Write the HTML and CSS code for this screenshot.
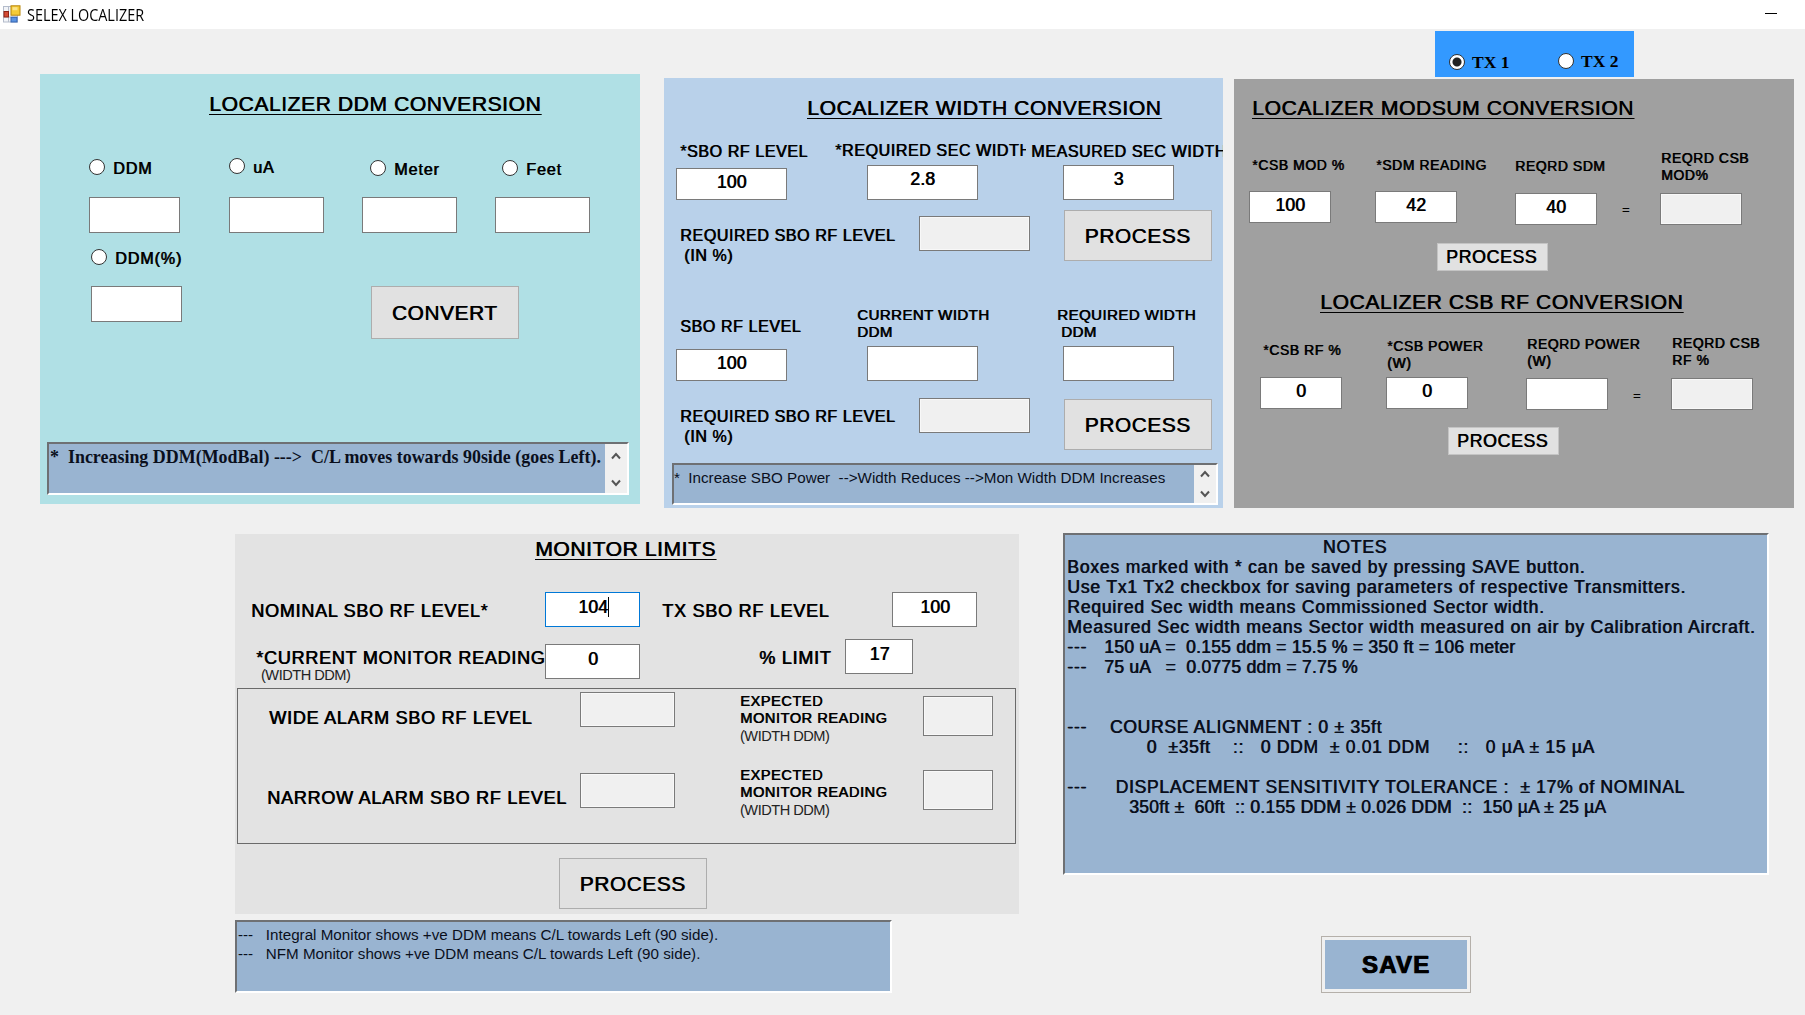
FILE: index.html
```html
<!DOCTYPE html>
<html lang="en">
<head>
<meta charset="utf-8">
<title>SELEX LOCALIZER</title>
<link rel="stylesheet" href="styles.css">
</head>
<body>
<header class="titlebar">
  <svg class="app-icon" width="18" height="18" viewBox="0 0 18 18">
    <rect x=".5" y="1.5" width="14" height="15.5" fill="#f2f4f8" stroke="#b4bccb"/>
    <path d="M5.5 1.5v15.500M.5 12h14" stroke="#b4bccb" fill="none"/>
    <rect x="8" y=".8" width="9" height="9.400" fill="#f5cb35" stroke="#b8860b"/>
    <rect x="9.500" y="2.200" width="5" height="3" fill="#fbe48a"/>
    <rect x="1" y="6.500" width="4.500" height="5.500" fill="#d34a34" stroke="#8f2415"/>
    <rect x="8" y="12.300" width="6" height="4.700" fill="#5b93e0" stroke="#3465b4"/>
  </svg>
  <span class="app-name">SELEX LOCALIZER</span>
  <span class="minimize"></span>
</header>

<main>
  <div class="upper">
    <section class="panel ddm">
      <h2>LOCALIZER DDM CONVERSION</h2>
      <div class="row ddm-radios">
        <label class="radio d1"><i></i>DDM</label>
        <label class="radio"><i></i>uA</label>
        <label class="radio d2"><i></i>Meter</label>
        <label class="radio d2"><i></i>Feet</label>
      </div>
      <div class="row ddm-inputs">
        <div class="field w91"></div><div class="field w95"></div><div class="field w95"></div><div class="field w95"></div>
      </div>
      <label class="radio percent"><i></i>DDM(%)</label>
      <div class="row ddm-convert">
        <div class="field w91"></div><button>CONVERT</button>
      </div>
      <div class="memo ddm-memo">
        <p>*  Increasing DDM(ModBal) ---&gt;  C/L moves towards 90side (goes Left).</p>
        <div class="scroll">
          <svg viewBox="0 0 10 8"><path d="M1 6.500 5 2l4 4.500"/></svg>
          <svg viewBox="0 0 10 8"><path d="M1 1.500 5 6l4-4.500"/></svg>
        </div>
      </div>
    </section>

    <section class="panel width">
      <h2>LOCALIZER WIDTH CONVERSION</h2>
      <div class="row width-labels">
        <span class="label d1">*SBO RF LEVEL</span>
        <span class="label clip">*REQUIRED SEC WIDTH</span>
        <span class="label d1">MEASURED SEC WIDTH</span>
      </div>
      <div class="row width-inputs first">
        <div class="field short d3">100</div><div class="field">2.8</div><div class="field">3</div>
      </div>
      <div class="row width-result r1">
        <div class="label two">REQUIRED SBO RF LEVEL<br><span class="indent">(IN %)</span></div>
        <div class="field off"></div>
        <button>PROCESS</button>
      </div>
      <div class="row width-labels2">
        <span class="label d11">SBO RF LEVEL</span>
        <div class="label tight">CURRENT WIDTH<br>DDM</div>
        <div class="label tight">REQUIRED WIDTH<br><span class="indent">DDM</span></div>
      </div>
      <div class="row width-inputs second">
        <div class="field short d3">100</div><div class="field"></div><div class="field"></div>
      </div>
      <div class="row width-result r2">
        <div class="label two">REQUIRED SBO RF LEVEL<br><span class="indent">(IN %)</span></div>
        <div class="field off"></div>
        <button>PROCESS</button>
      </div>
      <div class="memo width-memo">
        <p>*  Increase SBO Power  --&gt;Width Reduces --&gt;Mon Width DDM Increases</p>
        <div class="scroll">
          <svg viewBox="0 0 10 8"><path d="M1 6.500 5 2l4 4.500"/></svg>
          <svg viewBox="0 0 10 8"><path d="M1 1.500 5 6l4-4.500"/></svg>
        </div>
      </div>
    </section>

    <div class="right-col">
      <div class="tx">
        <label class="radio on"><i></i>TX 1</label>
        <label class="radio tx2"><i></i>TX 2</label>
      </div>
      <section class="panel mod">
        <h2>LOCALIZER MODSUM CONVERSION</h2>
        <div class="row mod-labels">
          <span class="small d7">*CSB MOD %</span>
          <span class="small d7">*SDM READING</span>
          <span class="small d8">REQRD SDM</span>
          <span class="small">REQRD CSB<br>MOD%</span>
        </div>
        <div class="row mod-inputs">
          <div class="field">100</div><div class="field">42</div><div class="field d2">40</div>
          <span class="small equals d11">=</span><div class="field off d2"></div>
        </div>
        <button class="mini">PROCESS</button>
        <h2 class="rf-title">LOCALIZER CSB RF CONVERSION</h2>
        <div class="row rf-labels">
          <span class="small d7">*CSB RF %</span>
          <span class="small d3">*CSB POWER<br>(W)</span>
          <span class="small d1">REQRD POWER<br>(W)</span>
          <span class="small">REQRD CSB<br>RF %</span>
        </div>
        <div class="row rf-inputs">
          <div class="field">0</div><div class="field">0</div><div class="field d1"></div>
          <span class="small equals d11">=</span><div class="field off d1"></div>
        </div>
        <button class="mini rf-button">PROCESS</button>
      </section>
    </div>
  </div>

  <div class="lower">
    <div class="left-col">
      <section class="panel monitor">
        <h2>MONITOR LIMITS</h2>
        <div class="row mon1">
          <span class="large d9">NOMINAL SBO RF LEVEL*</span>
          <div class="field focus w95">104<b class="caret"></b></div>
          <span class="large d9">TX SBO RF LEVEL</span>
          <div class="field w85">100</div>
        </div>
        <div class="row mon2">
          <div class="large d9">*CURRENT MONITOR READING<span class="sub">(WIDTH DDM)</span></div>
          <div class="field w95 d5">0</div>
          <span class="large d9">% LIMIT</span>
          <div class="field w68">17</div>
        </div>
        <div class="alarms">
          <div class="row alarm">
            <span class="large wide">WIDE ALARM SBO RF LEVEL</span>
            <div class="field off w95"></div>
            <div class="label tight expected">EXPECTED<br>MONITOR READING<span class="sub">(WIDTH DDM)</span></div>
            <div class="field off tall"></div>
          </div>
          <div class="row alarm">
            <span class="large narrow">NARROW ALARM SBO RF LEVEL</span>
            <div class="field off w95 d7"></div>
            <div class="label tight expected">EXPECTED<br>MONITOR READING<span class="sub">(WIDTH DDM)</span></div>
            <div class="field off tall"></div>
          </div>
        </div>
        <button>PROCESS</button>
      </section>
      <div class="memo log"><p>---   Integral Monitor shows +ve DDM means C/L towards Left (90 side).
---   NFM Monitor shows +ve DDM means C/L towards Left (90 side).</p></div>
    </div>

    <div class="notes-col">
      <div class="memo notes"><p>                                             NOTES
Boxes marked with * can be saved by pressing SAVE button.
Use Tx1 Tx2 checkbox for saving parameters of respective Transmitters.
Required Sec width means Commissioned Sector width.
Measured Sec width means Sector width measured on air by Calibration Aircraft.
<span class="dash">---</span>   <span class="figures">150 uA =  0.155 ddm = 15.5 % = 350 ft = 106 meter</span>
<span class="dash">---</span>   <span class="figures">75 uA   =  0.0775 ddm = 7.75 %</span>


<span class="dash">---</span>    <span class="course">COURSE ALIGNMENT : 0 ± 35ft</span>
              <span class="course">0  ±35ft    ::   0 DDM  ± 0.01 DDM     ::   0 µA ± 15 µA</span>

<span class="dash">---</span>     <span class="course">DISPLACEMENT SENSITIVITY TOLERANCE :  ± 17% of NOMINAL</span>
          <span class="figures"> 350ft ±  60ft  :: 0.155 DDM ± 0.026 DDM  ::  150 µA ± 25 µA</span></p></div>
      <button class="save"><span>SAVE</span></button>
    </div>
  </div>
</main>
</body>
</html>
```
FILE: styles.css
```css
* { box-sizing: border-box; }

body {
  margin: 0;
  width: 1805px;
  height: 1015px;
  overflow: hidden;
  background: #f0f0f0;
  color: #000;
  font-family: "Liberation Sans", Arial, sans-serif;
}

h2, p { margin: 0; font-weight: normal; }

/* title bar */
.titlebar {
  display: flex;
  height: 29px;
  padding: 5px 28px 0 3px;
  background: #fff;
}
.app-icon { flex: none; }
.app-name {
  margin: -1px 0 0 6px;
  font: 16px/22px "Open Sans", sans-serif;
  transform: scaleX(.9);
  transform-origin: left;
  white-space: nowrap;
}
.minimize { width: 12px; height: 1px; margin: 8px 0 0 auto; background: #000; }

/* emboldened text */
h2, .label, .small, .large, .radio, .field, button, .notes p {
  letter-spacing: .6px;
  text-shadow: .7px 0 0 currentColor;
  white-space: nowrap;
}
h2 {
  font-size: 21.1px;
  line-height: 24px;
  letter-spacing: .55px;
  text-decoration: underline;
  text-decoration-thickness: 1px;
  text-underline-offset: 3px;
}
.label { font-size: 16px; line-height: 18px; }
.label.two { line-height: 20px; }
.label.tight { font-size: 15px; line-height: 16.5px; letter-spacing: .45px; }
.small { font-size: 13.9px; line-height: 16.5px; }
.large { font-size: 18px; line-height: 20px; letter-spacing: .75px; }
.equals { font-size: 12px; }
.clip { width: 191px; overflow: hidden; }
.indent { margin-left: 4px; }
.sub {
  display: block;
  font-size: 14.6px;
  line-height: 16px;
  letter-spacing: -.5px;
  text-shadow: none;
  color: #222;
}

/* rows and small vertical shifts */
.row { display: grid; align-items: start; justify-items: start; }
.d1 { margin-top: 1px; }
.d2 { margin-top: 2px; }
.d3 { margin-top: 3px; }
.d5 { margin-top: 5px; }
.d7 { margin-top: 7px; }
.d8 { margin-top: 8px; }
.d9 { margin-top: 9px; }
.d11 { margin-top: 11px; }

/* controls */
.field {
  width: 111px;
  height: 35px;
  padding: 3px 0 0;
  border: 1px solid #7a7a7a;
  background: #fff;
  font-size: 17.6px;
  line-height: 20px;
  letter-spacing: .1px;
  text-align: center;
}
.field.off { background: #f0f0f0; box-shadow: inset 0 0 0 1px #fff8; }
.field.short { height: 32px; }
.field.tall { width: 70px; height: 40px; margin: 4px 0 0 1px; }
.field.focus { border-color: #0078d7; }
.caret { display: inline-block; width: 1px; height: 20px; margin-right: -1px; background: #000; vertical-align: -4px; }
.w68 { width: 68px; }
.w85 { width: 85px; }
.w91 { width: 91px; }
.w95 { width: 95px; }

button {
  width: 148px;
  height: 51px;
  padding: 0 1px 0 0;
  border: 1px solid #adadad;
  background: #e1e1e1;
  color: #000;
  font-family: inherit;
  font-size: 20.8px;
}

.radio { display: flex; gap: 8px; font-size: 16px; line-height: 19px; letter-spacing: .95px; }
.radio i {
  flex: none;
  width: 16px;
  height: 16px;
  border: 1px solid #333;
  border-radius: 50%;
  background: #fff;
}
.radio.on i { background: radial-gradient(circle, #222 0 4px, #fff 5px); }

.panel { display: flex; flex-direction: column; align-items: flex-start; overflow: hidden; }
.panel > * { flex: none; }
.panel > .row { width: 100%; }

/* sunken memo boxes */
.memo {
  display: flex;
  justify-content: space-between;
  border: 2px solid;
  border-color: #6e7073 #fff #fff #6e7073;
  background: #99b4d1;
}
.memo p { white-space: pre; font-size: 15.2px; line-height: 18.7px; color: #0a0f1c; }
.scroll {
  display: flex;
  flex-direction: column;
  align-items: center;
  justify-content: space-between;
  width: 22px;
  padding: 8px 0 6px;
  background: #f0f0f0;
}
.scroll svg { width: 10px; height: 8px; fill: none; stroke: #555; stroke-width: 2; }

/* page regions */
.upper { display: flex; align-items: flex-start; padding-left: 40px; height: 504px; }
.lower { display: flex; align-items: flex-start; padding-left: 235px; }

/* DDM conversion */
.ddm { width: 600px; height: 430px; margin-top: 45px; background: #b0e0e5; }
.ddm h2 { margin: 18px 0 1px 169px; }
.ddm-radios { grid-template-columns: 140px 141px 132px 100px; height: 18px; margin-top: 41px; padding-left: 49px; }
.ddm-inputs { grid-template-columns: 140px 133px 133px 95px; margin-top: 21px; padding-left: 49px; }
.ddm .field { height: 36px; }
.percent { height: 18px; margin: 16px 0 0 51px; }
.ddm-convert { grid-template-columns: 280px 148px; margin-top: 19px; padding-left: 51px; }
.ddm-convert button { height: 53px; }
.ddm-memo { width: 582px; height: 53px; margin: 103px 0 0 7px; }
.ddm-memo p { padding: 3px 0 0 1px; font: bold 17.95px/20px "Liberation Serif", serif; }

/* width conversion */
.width { width: 559px; height: 430px; margin: 49px 0 0 24px; background: #b9d1ea; }
.width h2 { margin: 18px 0 0 143px; }
.width-labels { grid-template-columns: 155px 196px 196px; height: 18px; margin-top: 22px; padding-left: 16px; }
.width-inputs { grid-template-columns: 191px 196px 111px; padding-left: 12px; height: 35px; }
.first { margin-top: 5px; }
.second { margin-top: 4px; }
.width-result { grid-template-columns: 239px 145px 148px; padding-left: 16px; }
.r1 { height: 51px; margin-top: 10px; }
.r1 .label { margin-top: 16px; }
.r1 .field { margin-top: 6px; }
.r2 { height: 63px; margin-top: 6px; }
.r2 .label { margin-top: 20px; }
.r2 .field { margin-top: 11px; }
.r2 button { margin-top: 12px; }
.width-labels2 { grid-template-columns: 177px 200px 140px; height: 35px; margin-top: 46px; padding-left: 16px; }
.width-memo { width: 546px; height: 42px; margin: 13px 0 0 8px; }
.width-memo p { padding: 4px 0 0; }
.width-memo .scroll { padding: 5px 0; }

/* transmitter switch */
.right-col { margin-left: 11px; }
.tx { display: flex; width: 199px; height: 46px; margin: 2px 0 0 201px; padding: 23px 0 0 14px; background: #39f; }
.tx .radio { flex: none; gap: 7px; width: 109px; font: bold 17.5px/16px "Liberation Serif", serif; letter-spacing: 0; text-shadow: none; }
.tx .tx2 { width: 70px; margin-top: -1px; }

/* modsum and CSB RF conversion */
.mod { width: 560px; height: 429px; margin-top: 2px; background: #a0a0a0; }
.mod h2 { margin: 17px 0 0 18px; }
.mod h2.rf-title { margin: 19px 0 0 86px; }
.mod .field { width: 82px; height: 32px; }
.mod-labels { grid-template-columns: 124px 139px 146px 100px; height: 33px; margin-top: 30px; padding-left: 18px; }
.mod-inputs { grid-template-columns: 126px 140px 107px 38px 82px; height: 34px; margin-top: 8px; padding-left: 15px; }
.rf-labels { grid-template-columns: 124px 140px 145px 100px; height: 36px; margin-top: 21px; padding-left: 29px; }
.rf-inputs { grid-template-columns: 126px 140px 107px 38px 82px; height: 34px; margin-top: 6px; padding-left: 26px; }
.mini { width: 111px; height: 28px; margin: 18px 0 0 203px; padding: 1px 2px 0 0; font-size: 17.8px; border-color: #c4c4c4; }
.rf-button { margin: 16px 0 0 214px; }

/* monitor limits */
.monitor { width: 784px; height: 380px; margin-top: 1px; background: #e3e3e3; }
.monitor .field { padding: 4px 0 0 1px; }
.monitor h2 { margin: 3px 0 0 300px; }
.mon1 { grid-template-columns: 294px 117px 230px 85px; height: 36px; margin-top: 31px; padding-left: 16px; }
.mon2 { grid-template-columns: 289px 214px 86px 68px; height: 46px; margin-top: 11px; padding-left: 21px; }
.mon2 .sub { margin: -1px 0 0 5px; }
.alarms { width: 779px; height: 156px; margin: 3px 0 0 2px; padding-top: 3px; border: 1px solid #6a6a6a; }
.alarm { grid-template-columns: 311px 161px 181px 70px; height: 74px; padding-left: 31px; }
.alarm .wide { margin-top: 16px; }
.alarm .narrow { margin: 22px 0 0 -2px; }
.alarm .expected { margin: 1px 0 0 -1px; font-size: 14.5px; letter-spacing: .6px; }
.expected .sub { margin: 2px 0 0; }
.monitor > button { margin: 14px 0 0 324px; }
.log { width: 657px; height: 73px; margin-top: 6px; }
.log p { padding: 4px 0 0 1px; }

/* notes and save */
.notes-col { margin-left: 44px; }
.notes { width: 706px; height: 342px; }
.notes p { padding: 2px 0 0 2px; font-size: 17.5px; line-height: 20px; letter-spacing: .82px; }
.notes .figures { letter-spacing: .25px; }
.notes .course { letter-spacing: .7px; }
.save { display: block; width: 150px; height: 57px; margin: 61px 0 0 258px; padding: 3px; border: 1px solid #b5b0aa; background: #f0f0f0; }
.save span {
  display: block;
  height: 49px;
  background: #99b4d1;
  font-size: 24px;
  font-weight: bold;
  line-height: 50px;
  letter-spacing: 1.2px;
  -webkit-text-stroke: .6px #000;
}
```
